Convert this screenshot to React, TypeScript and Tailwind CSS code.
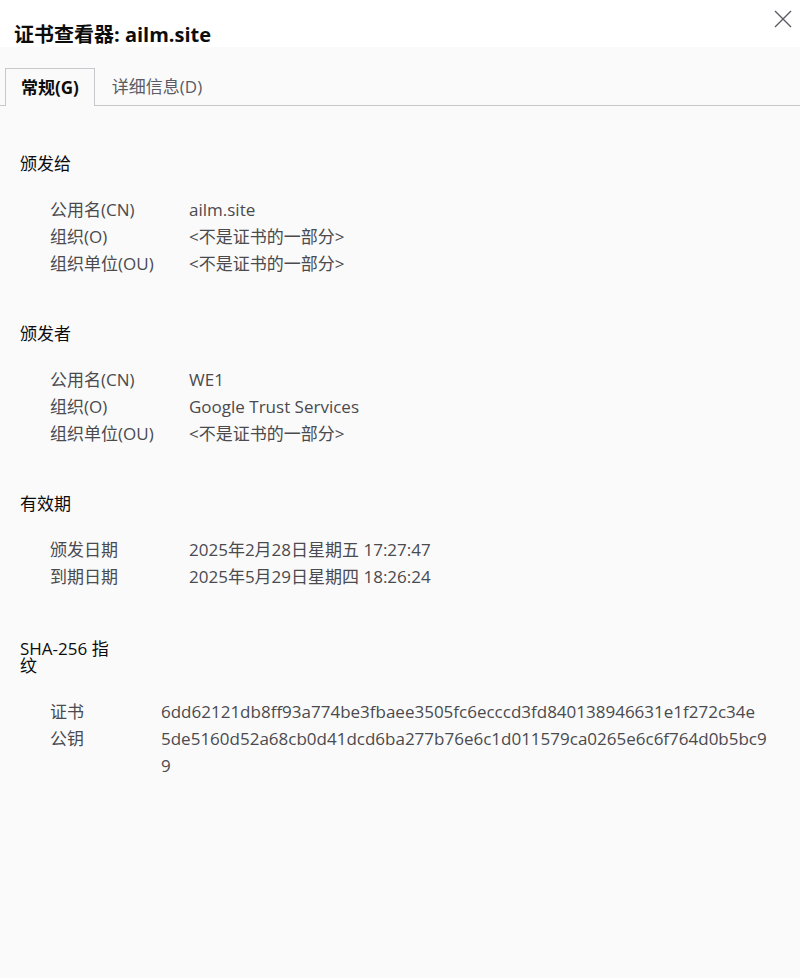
import React from "react";

type Row = { label: string; value: string };

const sections: { title: string; rows: Row[] }[] = [
  {
    title: "颁发给",
    rows: [
      { label: "公用名(CN)", value: "ailm.site" },
      { label: "组织(O)", value: "<不是证书的一部分>" },
      { label: "组织单位(OU)", value: "<不是证书的一部分>" },
    ],
  },
  {
    title: "颁发者",
    rows: [
      { label: "公用名(CN)", value: "WE1" },
      { label: "组织(O)", value: "Google Trust Services" },
      { label: "组织单位(OU)", value: "<不是证书的一部分>" },
    ],
  },
  {
    title: "有效期",
    rows: [
      { label: "颁发日期", value: "2025年2月28日星期五 17:27:47" },
      { label: "到期日期", value: "2025年5月29日星期四 18:26:24" },
    ],
  },
];

const fingerprints: Row[] = [
  { label: "证书", value: "6dd62121db8ff93a774be3fbaee3505fc6ecccd3fd840138946631e1f272c34e" },
  { label: "公钥", value: "5de5160d52a68cb0d41dcd6ba277b76e6c1d011579ca0265e6c6f764d0b5bc99" },
];

const font = { fontFamily: '"Open Sans", "Noto Sans CJK SC", sans-serif' };

function InfoRow({ row, labelWidth, wrap = false }: { row: Row; labelWidth: string; wrap?: boolean }) {
  return (
    <div className="flex text-[17px] leading-[27px] text-[#4a4a4f]">
      <span className={`${labelWidth} shrink-0`}>{row.label}</span>
      <span className={wrap ? "break-all pr-[26px] min-w-0" : ""}>{row.value}</span>
    </div>
  );
}

export default function App() {
  return (
    <div className="w-[800px] h-[978px] bg-[#fafafa] relative" style={font}>
      <div className="h-[47px] bg-white pl-[14px] pt-[23px]">
        <h1 className="text-[20px] leading-[24px] font-bold text-[#0c0c0d]">证书查看器: ailm.site</h1>
      </div>
      <button className="absolute top-[10px] right-[8px] w-[18px] h-[18px]">
        <svg viewBox="0 0 18 18" width="18" height="18" fill="none" stroke="#5b5b66" strokeWidth="1.4">
          <path d="M1 1L17 17M17 1L1 17" />
        </svg>
      </button>

      <div className="mt-[21px] flex border-b border-[#c8c8cc] pl-[5px] h-[38px]">
        <div className="h-[38px] -mb-px px-[15px] border border-b-0 border-[#c8c8cc] bg-[#fafafa] flex items-center text-[17px] font-bold text-[#0c0c0d]">
          常规(G)
        </div>
        <div className="h-[37px] px-[17px] flex items-center text-[17px] text-[#5b5b66]">详细信息(D)</div>
      </div>

      <div className="pt-[44px] pl-[20px] flex flex-col gap-[43px]">
        {sections.map((s) => (
          <section key={s.title}>
            <h2 className="text-[17px] leading-[27px] text-[#0c0c0d] mb-[19px]">{s.title}</h2>
            <div className="pl-[30px]">
              {s.rows.map((r) => (
                <InfoRow key={r.label} row={r} labelWidth="w-[139px]" />
              ))}
            </div>
          </section>
        ))}
        <section className="pt-[7px]">
          <h2 className="text-[17px] leading-[17px] text-[#0c0c0d] w-[100px] mb-[24px]">SHA-256 指纹</h2>
          <div className="pl-[30px]">
            {fingerprints.map((r) => (
              <InfoRow key={r.label} row={r} labelWidth="w-[111px]" wrap />
            ))}
          </div>
        </section>
      </div>
    </div>
  );
}
